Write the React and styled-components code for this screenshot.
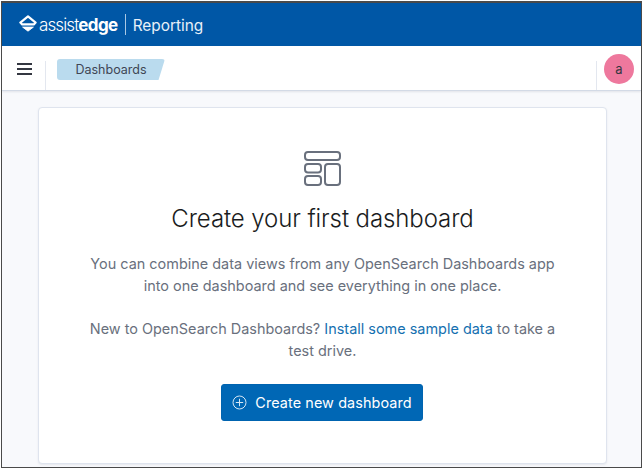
import React from "react";
import styled, { createGlobalStyle } from "styled-components";

const Global = createGlobalStyle`
  html, body { margin: 0; padding: 0; background: #fff; }
  body { font-family: Inter, "Liberation Sans", sans-serif; }
`;

const Frame = styled.div`
  width: 641px;
  height: 467px;
  margin: 1px;
  box-sizing: border-box;
  border: 1px solid #4a4a4a;
  border-top-width: 2px;
  overflow: hidden;
  display: flex;
  flex-direction: column;
  background: #f8f9fc;
`;

const Header = styled.header`
  height: 43px;
  flex: none;
  background: #0057a6;
  display: flex;
  align-items: center;
  padding-left: 17px;
  color: #fff;
`;

const LogoMark = styled.svg`
  flex: none;
  margin: -2px 2px 0 0;
`;

const Brand = styled.div`
  display: flex;
  align-items: center;
  font-size: 17px;
  letter-spacing: -0.9px;
  line-height: 1;
  padding-top: 2px;
  font-weight: 300;
  b { font-weight: 700; letter-spacing: -0.6px; }
`;

const Divider = styled.span`
  width: 1px;
  height: 21px;
  background: #a9c8e4;
  margin: -2px 7px 0 7px;
`;

const Product = styled.span`
  font-size: 15.4px;
  letter-spacing: 0;
  font-weight: 400;
  color: #e8f0f8;
`;

const Nav = styled.nav`
  height: 45px;
  flex: none;
  box-sizing: border-box;
  background: #fff;
  border-bottom: 1px solid #d3dae6;
  box-shadow: 0 1px 2px rgba(100, 110, 130, 0.15);
  display: flex;
  align-items: stretch;
`;

const MenuCell = styled.div`
  width: 44px;
  flex: none;
  box-sizing: border-box;
  padding: 17px 0 0 15px;
  display: flex;
  align-items: flex-start;
  position: relative;
  &::after {
    content: "";
    position: absolute;
    right: 0;
    top: 15px;
    bottom: 0;
    width: 1px;
    background: #e3e7ef;
  }
`;

const Crumbs = styled.div`
  flex: 1;
  padding: 13px 0 0 11px;
`;

const Crumb = styled.span`
  display: flex;
  align-items: center;
  justify-content: center;
  width: 108px;
  height: 21px;
  font-size: 12.5px;
  color: #3f4654;
  background: #badbee;
  border-radius: 3px;
  clip-path: polygon(0 0, 100% 0, 94% 100%, 0 100%);
`;

const UserCell = styled.div`
  width: 45px;
  flex: none;
  position: relative;
  &::before {
    content: "";
    position: absolute;
    left: 0;
    top: 15px;
    bottom: 0;
    width: 1px;
    background: #e3e7ef;
  }
`;

const Avatar = styled.div`
  position: absolute;
  left: 8px;
  top: 8px;
  width: 30px;
  height: 30px;
  border-radius: 50%;
  background: #ee789d;
  color: #343741;
  font-size: 13px;
  display: flex;
  align-items: center;
  justify-content: center;
`;

const Main = styled.main`
  flex: 1;
  min-height: 0;
  padding: 16px 34px 0 36px;
  display: flex;
`;

const Panel = styled.section`
  flex: 1;
  height: 357px;
  box-sizing: border-box;
  background: #fff;
  border: 1px solid #dfe4ee;
  border-radius: 4px;
  box-shadow: 0 1px 2px rgba(100, 110, 130, 0.12);
  display: flex;
  flex-direction: column;
  align-items: center;
  padding-top: 42px;
  text-align: center;
`;

const Title = styled.h1`
  margin: 15px 0 0;
  font-size: 24px;
  line-height: 32px;
  font-weight: 300;
  letter-spacing: -0.1px;
  color: #1a1c21;
`;

const Copy = styled.p`
  margin: ${(p) => p.$top}px 0 0;
  font-size: 14.45px;
  line-height: 21.6px;
  color: #69707d;
  width: 520px;
  a { color: #1570b0; text-decoration: none; }
`;

const Button = styled.button`
  margin: 23px 1px 0 0;
  width: 202px;
  height: 37px;
  border: 1px solid #0064b0;
  border-radius: 3px;
  background: #0067b5;
  color: #fff;
  font: 400 14.4px Inter, "Liberation Sans", sans-serif;
  letter-spacing: 0.1px;
  display: flex;
  align-items: center;
  justify-content: center;
  gap: 8px;
  padding: 0;
`;

const Logo = () => (
  <LogoMark width="18" height="19" viewBox="0 0 20 19" fill="none" stroke="#fff" strokeWidth="2.4" strokeLinejoin="round">
    <path d="M1.5 8.5 L10 1.5 L18.5 8.5 L16.5 10.5 H3.5 Z" />
    <path d="M4 13.5 H16 L10 18 Z" fill="#fff" strokeWidth="1" />
  </LogoMark>
);

const Burger = () => (
  <svg width="16" height="12" viewBox="0 0 16 12" fill="none" stroke="#343741" strokeWidth="2">
    <path d="M0 1 H15 M0 6 H15 M0 11 H15" />
  </svg>
);

const DashIcon = () => (
  <svg width="38" height="38" viewBox="0 0 38 38" fill="none" stroke="#69707d" strokeWidth="2">
    <rect x="1" y="2" width="35" height="8" rx="3" />
    <rect x="1" y="14" width="16" height="8.5" rx="3" />
    <rect x="1" y="26" width="16" height="9" rx="3" />
    <rect x="21" y="14" width="15" height="21" rx="3" />
  </svg>
);

const PlusCircle = () => (
  <svg width="15" height="15" viewBox="0 0 15 15" fill="none" stroke="#d5e6f4" strokeWidth="1">
    <circle cx="7.5" cy="7.5" r="6.5" />
    <path d="M7.5 3.8 V11.2 M3.8 7.5 H11.2" />
  </svg>
);

export default function App() {
  return (
    <Frame>
      <Global />
      <Header>
        <Logo />
        <Brand>
          assist<b>edge</b>
          <Divider />
          <Product>Reporting</Product>
        </Brand>
      </Header>
      <Nav>
        <MenuCell>
          <Burger />
        </MenuCell>
        <Crumbs>
          <Crumb>Dashboards</Crumb>
        </Crumbs>
        <UserCell>
          <Avatar>a</Avatar>
        </UserCell>
      </Nav>
      <Main>
        <Panel>
          <DashIcon />
          <Title>Create your first dashboard</Title>
          <Copy $top={18}>
            You can combine data views from any OpenSearch Dashboards app
            <br />
            into one dashboard and see everything in one place.
          </Copy>
          <Copy $top={22}>
            New to OpenSearch Dashboards? <a href="#sample">Install some sample data</a> to take a
            <br />
            test drive.
          </Copy>
          <Button>
            <PlusCircle />
            Create new dashboard
          </Button>
        </Panel>
      </Main>
    </Frame>
  );
}
